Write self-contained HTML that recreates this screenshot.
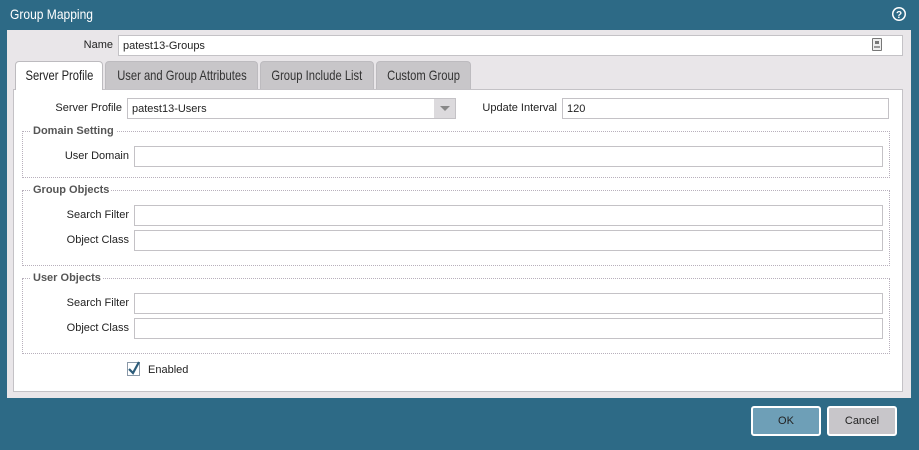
<!DOCTYPE html>
<html><head><style>
*{box-sizing:border-box;margin:0;padding:0}
body{width:919px;height:450px;background:#2d6a86;font-family:"Liberation Sans",sans-serif;font-size:11px;color:#222;position:relative;overflow:hidden}
.a{position:absolute}
.title{left:10px;top:6px;color:#fff;font-size:14px;transform:scaleX(0.86);transform-origin:left}
.panel{left:7px;top:30px;width:904px;height:368px;background:#e9e6e9}
.inp{position:absolute;background:#fff;border:1px solid #c4c2c6;height:21px;line-height:20px;padding-left:4px;font-size:11px}
.lbl{position:absolute;text-align:right;font-size:11px;color:#222}
.tab{position:absolute;top:61px;height:28px;background:#c8c6c9;border:1px solid #bdbbbf;border-bottom:none;border-radius:4px 4px 0 0;font-size:14px;color:#333;line-height:27px;white-space:nowrap;display:flex;justify-content:center}
.tab span{display:block;flex:none;transform:scaleX(0.8)}
.content{left:13px;top:89px;width:890px;height:303px;background:#fff;border:1px solid #c4c2c6}
.fs{position:absolute;left:22px;width:868px;border:1px dotted #b8b0bc}
.lg{position:absolute;left:8px;top:-7px;background:#fff;padding:0 2px;font-weight:bold;color:#555;font-size:11px}
.btn{position:absolute;top:406px;width:70px;height:30px;border:2px solid #fff;border-radius:3px;text-align:center;line-height:27px;font-size:11px;color:#222}
</style></head><body>
<div class="a title">Group Mapping</div>
<svg class="a" style="left:891px;top:6px" width="16" height="16"><circle cx="8" cy="8" r="7" fill="#fff"/><circle cx="8" cy="8" r="5.5" fill="#2d6a86"/><text x="8" y="12" font-size="10" font-weight="bold" fill="#fff" text-anchor="middle" font-family="Liberation Sans">?</text></svg>
<div class="a panel"></div>
<div class="lbl" style="left:40px;top:39px;width:73px">Name</div>
<div class="inp" style="left:118px;top:35px;width:785px">patest13-Groups</div>
<div class="a" style="left:872px;top:38px;width:10px;height:13px;border:1px solid #777;border-radius:1px;background:#eee"></div>
<div class="a" style="left:875px;top:41px;width:4px;height:3px;background:#777"></div>
<div class="a" style="left:874px;top:46px;width:6px;height:2px;background:#999"></div>
<div class="a content"></div>
<div class="tab" style="left:15px;width:88px;background:#fff;height:29px;color:#222"><span>Server Profile</span></div>
<div class="tab" style="left:105px;width:153px"><span>User and Group Attributes</span></div>
<div class="tab" style="left:260px;width:114px"><span>Group Include List</span></div>
<div class="tab" style="left:376px;width:95px"><span>Custom Group</span></div>
<div class="lbl" style="left:30px;top:102px;width:92px">Server Profile</div>
<div class="inp" style="left:127px;top:98px;width:329px">patest13-Users</div>
<div class="a" style="left:434px;top:99px;width:21px;height:19px;background:#dcdadd"></div>
<div class="a" style="left:440px;top:106px;width:0;height:0;border-left:5px solid transparent;border-right:5px solid transparent;border-top:5px solid #888"></div>
<div class="lbl" style="left:470px;top:102px;width:87px">Update Interval</div>
<div class="inp" style="left:562px;top:98px;width:327px">120</div>

<div class="fs" style="top:131px;height:47px"><div class="lg">Domain Setting</div></div>
<div class="lbl" style="left:40px;top:150px;width:89px">User Domain</div>
<div class="inp" style="left:134px;top:146px;width:749px"></div>

<div class="fs" style="top:190px;height:76px"><div class="lg">Group Objects</div></div>
<div class="lbl" style="left:40px;top:209px;width:89px">Search Filter</div>
<div class="inp" style="left:134px;top:205px;width:749px"></div>
<div class="lbl" style="left:40px;top:234px;width:89px">Object Class</div>
<div class="inp" style="left:134px;top:230px;width:749px"></div>

<div class="fs" style="top:278px;height:76px"><div class="lg">User Objects</div></div>
<div class="lbl" style="left:40px;top:297px;width:89px">Search Filter</div>
<div class="inp" style="left:134px;top:293px;width:749px"></div>
<div class="lbl" style="left:40px;top:322px;width:89px">Object Class</div>
<div class="inp" style="left:134px;top:318px;width:749px"></div>

<svg class="a" style="left:126px;top:361px" width="16" height="16"><rect x="1.5" y="1.5" width="12" height="13" fill="#fff" stroke="#8a99a8"/><path d="M3 8 L7 12 L13 1" stroke="#2d5d7a" stroke-width="2.2" fill="none"/></svg>
<div class="a" style="left:148px;top:364px;font-size:11px">Enabled</div>

<div class="btn" style="left:751px;background:#6e9fb7">OK</div>
<div class="btn" style="left:827px;background:#c8c6ca">Cancel</div>
</body></html>
